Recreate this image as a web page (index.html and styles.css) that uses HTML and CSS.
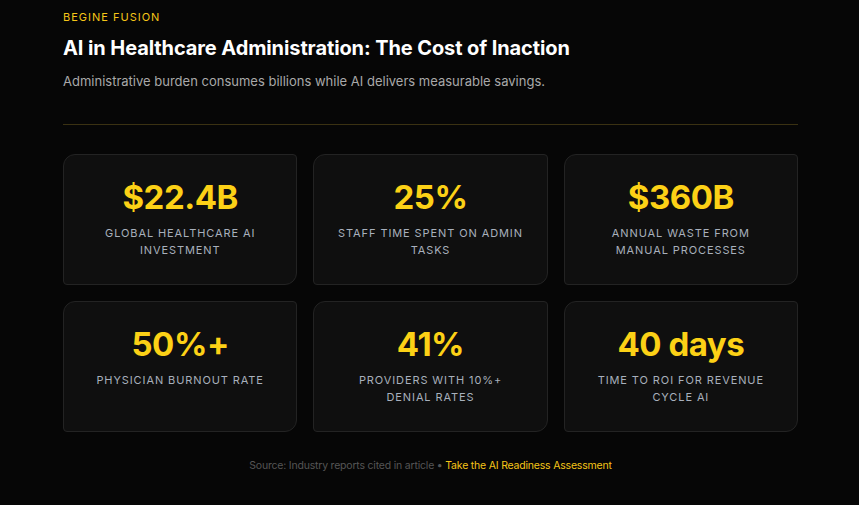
FILE: index.html
```html
<!DOCTYPE html>
<html lang="en">
<head>
<meta charset="utf-8">
<link rel="stylesheet" href="styles.css">
</head>
<body>
<div class="page">
  <div class="brand">BEGINE FUSION</div>
  <h1 class="title">AI in Healthcare Administration: The Cost of Inaction</h1>
  <p class="subtitle">Administrative burden consumes billions while AI delivers measurable savings.</p>
  <div class="divider"></div>
  <div class="grid">
    <div class="card"><div class="num">$22.4B</div><div class="label">Global healthcare AI<br>investment</div></div>
    <div class="card"><div class="num">25%</div><div class="label">Staff time spent on admin<br>tasks</div></div>
    <div class="card"><div class="num">$360B</div><div class="label">Annual waste from<br>manual processes</div></div>
    <div class="card"><div class="num">50%+</div><div class="label">Physician burnout rate</div></div>
    <div class="card"><div class="num">41%</div><div class="label">Providers with 10%+<br>denial rates</div></div>
    <div class="card"><div class="num">40 days</div><div class="label">Time to ROI for revenue<br>cycle AI</div></div>
  </div>
  <div class="footer">Source: Industry reports cited in article • <a class="link" href="#">Take the AI Readiness Assessment</a></div>
</div>
</body>
</html>
```
FILE: styles.css
```css
html, body {
  margin: 0;
  padding: 0;
  background: #060606;
}
body {
  font-family: "Inter", "Liberation Sans", sans-serif;
  color: #fff;
  width: 859px;
  height: 505px;
  overflow: hidden;
}
.page {
  padding: 10px 61px 0 63px;
}
.brand {
  font-size: 11px;
  letter-spacing: 1px;
  color: #f5c518;
  line-height: 14px;
}
.title {
  margin: 11px 0 0;
  font-size: 20px;
  font-weight: 700;
  letter-spacing: -0.1px;
  line-height: 26px;
  color: #fff;
}
.subtitle {
  margin: 11px 0 0;
  font-size: 13px;
  color: #a9a9a9;
  line-height: 18px;
}
.divider {
  margin-top: 34px;
  height: 1px;
  background: #3a3112;
}
.grid {
  margin-top: 29px;
  display: grid;
  grid-template-columns: repeat(3, 1fr);
  gap: 16px 16px;
}
.card {
  background: #0f0f0f;
  border: 1px solid #232323;
  border-radius: 12px 4px 12px 4px;
  display: flex;
  flex-direction: column;
  align-items: center;
  padding-top: 21px;
  box-sizing: border-box;
  height: 131px;
}
.num {
  font-size: 33px;
  font-weight: 700;
  color: #fcd116;
  letter-spacing: -0.5px;
  line-height: 42px;
}
.label {
  margin-top: 7px;
  font-size: 11px;
  letter-spacing: 0.9px;
  text-transform: uppercase;
  color: #a8b0bc;
  text-align: center;
  line-height: 17px;
}
.footer {
  margin-top: 27px;
  text-align: center;
  font-size: 10.5px;
  color: #555;
  letter-spacing: -0.2px;
}
.link {
  color: #f5c518;
  text-decoration: none;
}
```
